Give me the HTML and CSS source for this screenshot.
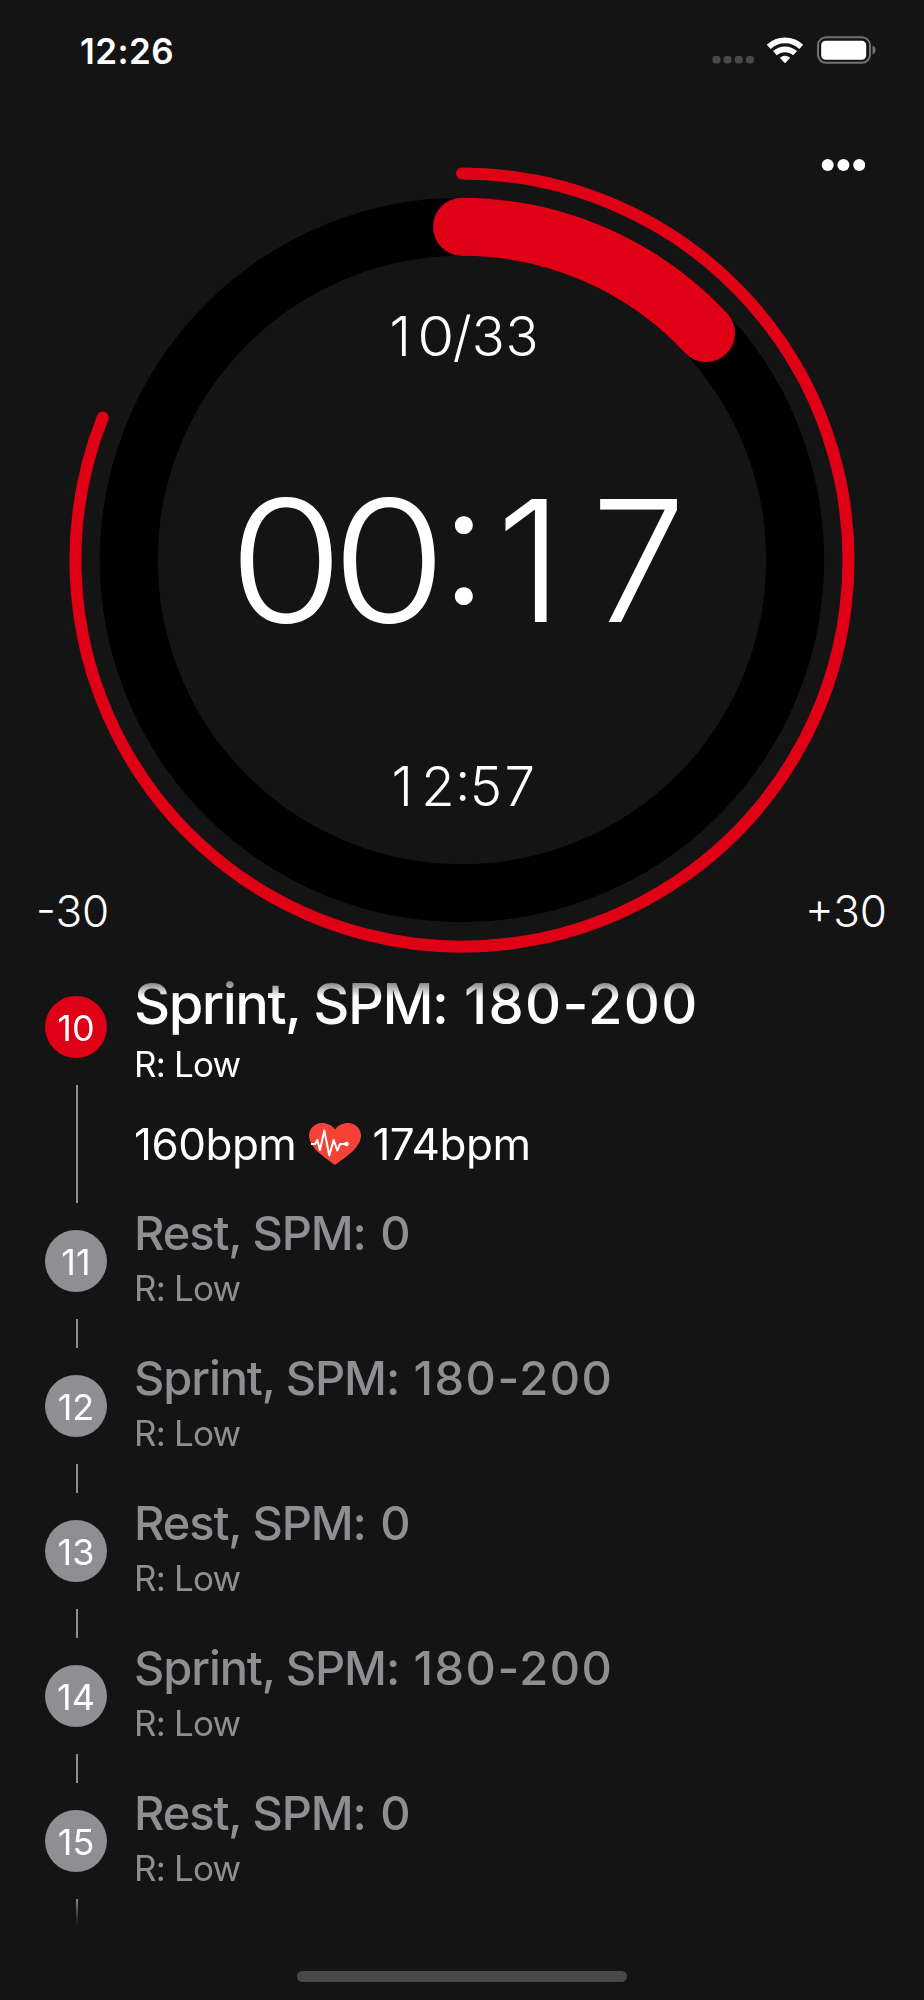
FILE: index.html
```html
<!DOCTYPE html>
<html lang="en">
<head>
    <meta charset="UTF-8">
    <meta name="viewport" content="width=device-width, initial-scale=1.0">
    <title>Interval Timer</title>
    <link rel="stylesheet" href="styles.css">
</head>
<body>
    <div class="screen">
        <!-- Status bar -->
        <header class="status-bar">
            <div class="status-time">12:26</div>
            <div class="status-icons">
                <svg class="icon-signal" width="43" height="28" viewBox="0 0 43 28">
                    <rect x="0.5" y="20" width="8" height="7.5" rx="3"/>
                    <rect x="11.5" y="20" width="8" height="7.5" rx="3"/>
                    <rect x="22.700" y="20" width="8" height="7.5" rx="3"/>
                    <rect x="34" y="20" width="8" height="7.5" rx="3"/>
                </svg>
                <svg class="icon-wifi" width="36" height="28" viewBox="0 0 36 28">
                    <path class="wifi-arc" d="M1.700 10.900A23.800 23.800 0 0 1 34.300 10.900"/>
                    <path class="wifi-arc" d="M7.900 17.200A15 15 0 0 1 28.100 17.200"/>
                    <path class="wifi-dot" d="M13.400 21.800Q18 18.600 22.600 21.800L18 26.800z"/>
                </svg>
                <svg class="icon-battery" width="60" height="28" viewBox="0 0 60 28">
                    <rect class="battery-case" x="1" y="1.300" width="52" height="25.500" rx="8"/>
                    <rect class="battery-level" x="4.200" y="4.800" width="45" height="19" rx="4.500"/>
                    <path class="battery-cap" d="M55.500 9.500c1.900.8 3.100 2.500 3.100 4.500s-1.200 3.700-3.100 4.500z"/>
                </svg>
            </div>
        </header>

        <!-- Timer dial -->
        <section class="timer">
            <svg class="dial" viewBox="0 100 924 868">
                <circle class="dial-track" cx="462" cy="560" r="333.200"/>
                <path class="dial-interval" d="M462 226.800A333.200 333.200 0 0 1 706 333.100"/>
                <path class="dial-total" d="M462 173.600A386.500 386.500 0 1 1 102.700 417.600"/>
            </svg>
            <div class="readout">
                <div class="digits"><span class="one">1</span><span class="zero">0</span><span class="slash">/</span><span>3</span><span>3</span></div>
                <div class="digits digits-large"><span class="zero">0</span><span class="zero">0</span><span class="colon">:</span><span class="one">1</span><span>7</span></div>
                <div class="digits"><span class="one">1</span><span>2</span><span class="colon">:</span><span>5</span><span>7</span></div>
            </div>
            <div class="controls">
                <svg class="menu-button" width="44" height="14" viewBox="0 0 44 14">
                    <circle cx="6.700" cy="7" r="6"/>
                    <circle cx="22.400" cy="7" r="6"/>
                    <circle cx="38.200" cy="7" r="6"/>
                </svg>
                <div class="skip-row">
                    <span class="skip-back">-30</span>
                    <span class="skip-forward">+30</span>
                </div>
            </div>
        </section>

        <!-- Interval list -->
        <main class="intervals">
            <div class="interval active">
                <div class="rail">
                    <div class="badge">10</div>
                    <div class="rail-line"></div>
                </div>
                <div class="info">
                    <div class="title">Sprint, SPM: <span class="spm">180-200</span></div>
                    <div class="detail">R: Low</div>
                    <div class="heart-rate">
                        <span class="bpm">160bpm</span>
                        <svg class="icon-heart" width="52" height="42" viewBox="0 0 52 42">
                            <path class="heart-shape" d="M26 42C18 36 0 25.500 0 12.600 0 5.600 5.800 0 13 0c5.400 0 10.200 2.400 13 6.400C28.800 2.400 33.600 0 39 0c7.200 0 13 5.600 13 12.600C52 25.500 34 36 26 42z"/>
                            <path class="heart-pulse" d="M2 21h4.300l2-4L11 27l4.300-19.500 5 25L24.700 17l3.600 10.500L31 21h6"/>
                            <circle class="heart-dot" cx="37.500" cy="21" r="2.300"/>
                        </svg>
                        <span class="bpm">174bpm</span>
                    </div>
                </div>
            </div>
            <div class="interval">
                <div class="rail">
                    <div class="badge">11</div>
                    <div class="rail-line"></div>
                </div>
                <div class="info">
                    <div class="title">Rest, SPM: <span class="spm">0</span></div>
                    <div class="detail">R: Low</div>
                </div>
            </div>
            <div class="interval">
                <div class="rail">
                    <div class="badge">12</div>
                    <div class="rail-line"></div>
                </div>
                <div class="info">
                    <div class="title">Sprint, SPM: <span class="spm">180-200</span></div>
                    <div class="detail">R: Low</div>
                </div>
            </div>
            <div class="interval">
                <div class="rail">
                    <div class="badge">13</div>
                    <div class="rail-line"></div>
                </div>
                <div class="info">
                    <div class="title">Rest, SPM: <span class="spm">0</span></div>
                    <div class="detail">R: Low</div>
                </div>
            </div>
            <div class="interval">
                <div class="rail">
                    <div class="badge">14</div>
                    <div class="rail-line"></div>
                </div>
                <div class="info">
                    <div class="title">Sprint, SPM: <span class="spm">180-200</span></div>
                    <div class="detail">R: Low</div>
                </div>
            </div>
            <div class="interval">
                <div class="rail">
                    <div class="badge">15</div>
                    <div class="rail-line"></div>
                </div>
                <div class="info">
                    <div class="title">Rest, SPM: <span class="spm">0</span></div>
                    <div class="detail">R: Low</div>
                </div>
            </div>
        </main>

        <footer class="home-area">
            <div class="home-indicator"></div>
        </footer>
    </div>
</body>
</html>
```
FILE: styles.css
```css
* {
    margin: 0;
    padding: 0;
    box-sizing: border-box;
}

body {
    font-family: Inter, 'Liberation Sans', sans-serif;
    background-color: #141414;
    color: #ffffff;
    overflow: hidden;
}

.screen {
    display: flex;
    flex-direction: column;
    width: 924px;
    height: 2000px;
}

/* Status bar */
.status-bar {
    display: flex;
    justify-content: space-between;
    height: 100px;
    padding: 36px 47px 0 80px;
}

.status-time {
    font-size: 35px;
    font-weight: 600;
    line-height: 30px;
    letter-spacing: 0.4px;
}

.status-icons {
    display: flex;
}

.icon-signal {
    margin-right: 12px;
    fill: #48484a;
}

.icon-wifi {
    margin-right: 14px;
}

.wifi-arc {
    fill: none;
    stroke: #ffffff;
    stroke-width: 5.8;
}

.wifi-dot {
    fill: #ffffff;
    stroke: #ffffff;
    stroke-linejoin: round;
}

.battery-case {
    fill: none;
    stroke: #727272;
    stroke-width: 2;
}

.battery-level {
    fill: #ffffff;
}

.battery-cap {
    fill: #727272;
}

/* Timer */
.timer {
    display: grid;
    height: 869px;
}

.dial,
.readout,
.controls {
    grid-area: 1 / 1;
}

.dial {
    width: 924px;
    height: 868px;
    fill: none;
    stroke-linecap: round;
}

.dial-track {
    stroke: #000000;
    stroke-width: 58;
}

.dial-interval {
    stroke: #e00015;
    stroke-width: 58;
}

.dial-total {
    stroke: #e00015;
    stroke-width: 12;
}

.readout {
    display: flex;
    flex-direction: column;
    align-items: center;
    padding-top: 204px;
    font-weight: 300;
}

.digits {
    display: flex;
    font-size: 54.5px;
    line-height: 64px;
    text-align: center;
}

.digits span {
    width: 0.62em;
}

.digits .zero {
    padding-right: 0.08em;
    letter-spacing: -0.08em;
    transform: scaleX(1.1);
}

.digits .colon {
    width: 0.26em;
    font-feature-settings: 'case' 1;
}

.digits .slash {
    width: 0.34em;
}

.digits .one {
    padding-right: 0.07em;
}

.digits-large {
    margin: 93px 0;
    font-size: 169px;
    line-height: 200px;
}

.digits-large span {
    width: 103px;
}

.digits-large .colon {
    padding-right: 3px;
}

.controls {
    display: flex;
    flex-direction: column;
    justify-content: space-between;
    padding: 58px 37px 32px 36px;
}

.menu-button {
    align-self: flex-end;
    margin-right: 22px;
    fill: #ffffff;
}

.skip-row {
    display: flex;
    justify-content: space-between;
    font-size: 44px;
    font-weight: 300;
    line-height: 52px;
}

/* Interval list */
.intervals {
    height: 956px;
    padding: 0 45px;
    overflow: hidden;
    -webkit-mask-image: linear-gradient(to bottom, transparent 0, #000 28px, #000 928px, transparent 956px);
    mask-image: linear-gradient(to bottom, transparent 0, #000 28px, #000 928px, transparent 956px);
}

.interval {
    display: flex;
    height: 145px;
    color: #8e8e93;
}

.interval.active {
    height: 234px;
    color: #ffffff;
}

.rail {
    display: flex;
    flex-direction: column;
    align-items: center;
    gap: 27px;
    width: 62px;
    padding-top: 27px;
}

.badge {
    flex: none;
    width: 62px;
    height: 62px;
    border-radius: 50%;
    background-color: #8e8e93;
    color: #ffffff;
    font-size: 36px;
    line-height: 64px;
    text-align: center;
}

.interval.active .badge {
    background-color: #e00015;
}

.rail-line {
    flex: 1;
    width: 2px;
    margin-left: 2px;
    background-color: #8e8e93;
}

.info {
    padding: 2px 0 0 27px;
    white-space: nowrap;
}

.title {
    font-size: 47px;
    font-weight: 500;
    line-height: 56px;
    letter-spacing: -1.1px;
}

.spm {
    margin-left: 3px;
    letter-spacing: 1.5px;
}

.interval.active .title {
    font-size: 56px;
    line-height: 66px;
    letter-spacing: -1.5px;
}

.interval.active .spm {
    letter-spacing: 1.3px;
}

.detail {
    margin-top: 6px;
    font-size: 35px;
    line-height: 42px;
    letter-spacing: -0.8px;
}

.heart-rate {
    display: flex;
    align-items: center;
    margin-top: 32px;
    font-size: 44px;
    line-height: 54px;
    letter-spacing: -0.5px;
}

.icon-heart {
    margin: 0 11px 0 13px;
}

.heart-shape {
    fill: #f44336;
}

.heart-pulse {
    fill: none;
    stroke: #ffffff;
    stroke-width: 2;
    stroke-linejoin: round;
}

.heart-dot {
    fill: #ffffff;
}

/* Home indicator */
.home-area {
    display: flex;
    justify-content: center;
    padding-top: 46px;
}

.home-indicator {
    width: 330px;
    height: 11px;
    border-radius: 6px;
    background-color: #484848;
}
```
